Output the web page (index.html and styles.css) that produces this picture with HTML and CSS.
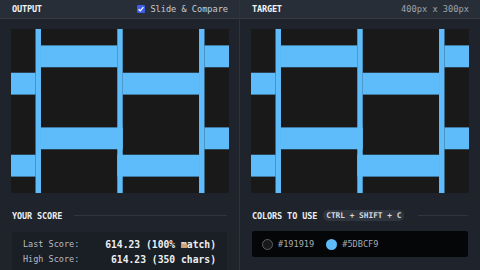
FILE: index.html
```html
<!DOCTYPE html>
<html>
<head>
<meta charset="utf-8">
<link rel="stylesheet" href="styles.css">
</head>
<body>
<div class="app">
  <section class="pane pane-left">
    <header class="bar">
      <span class="bar-title">OUTPUT</span>
      <label class="toggle"><span class="check"><svg viewBox="0 0 8 8" width="8" height="8"><path d="M1.6 4.2 L3.3 5.8 L6.4 2.2" fill="none" stroke="#fff" stroke-width="1.3"/></svg></span>Slide &amp; Compare</label>
    </header>
    <div class="stage">
      <svg class="canvas" viewBox="0 0 400 300" preserveAspectRatio="none">
        <rect width="400" height="300" fill="#191919"/>
        <g fill="#5DBCF9">
          <rect x="45" y="0" width="10" height="300"/>
          <rect x="195" y="0" width="10" height="300"/>
          <rect x="345" y="0" width="10" height="300"/>
          <rect x="55" y="30" width="140" height="40"/>
          <rect x="355" y="30" width="45" height="40"/>
          <rect x="0" y="80" width="45" height="40"/>
          <rect x="205" y="80" width="140" height="40"/>
          <rect x="55" y="180" width="150" height="40"/>
          <rect x="355" y="180" width="45" height="40"/>
          <rect x="0" y="230" width="45" height="40"/>
          <rect x="195" y="230" width="150" height="40"/>
        </g>
      </svg>
    </div>
    <div class="section">
      <div class="section-head"><span class="section-title">YOUR SCORE</span><span class="rule"></span></div>
      <div class="score-box">
        <span class="label">Last Score:</span><span class="value">614.23 (100% match)</span>
        <span class="label">High Score:</span><span class="value">614.23 (350 chars)</span>
      </div>
    </div>
  </section>
  <section class="pane pane-right">
    <header class="bar">
      <span class="bar-title">TARGET</span>
      <span class="dims">400px x 300px</span>
    </header>
    <div class="stage">
      <svg class="canvas" viewBox="0 0 400 300" preserveAspectRatio="none">
        <rect width="400" height="300" fill="#191919"/>
        <g fill="#5DBCF9">
          <rect x="45" y="0" width="10" height="300"/>
          <rect x="195" y="0" width="10" height="300"/>
          <rect x="345" y="0" width="10" height="300"/>
          <rect x="55" y="30" width="140" height="40"/>
          <rect x="355" y="30" width="45" height="40"/>
          <rect x="0" y="80" width="45" height="40"/>
          <rect x="205" y="80" width="140" height="40"/>
          <rect x="55" y="180" width="150" height="40"/>
          <rect x="355" y="180" width="45" height="40"/>
          <rect x="0" y="230" width="45" height="40"/>
          <rect x="195" y="230" width="150" height="40"/>
        </g>
      </svg>
    </div>
    <div class="section">
      <div class="section-head"><span class="section-title">COLORS TO USE</span><span class="kbd">CTRL + SHIFT + C</span><span class="rule rule-short"></span></div>
      <div class="colors-box">
        <span class="swatch swatch-dark"></span><span class="code">#191919</span>
        <span class="swatch swatch-blue"></span><span class="code">#5DBCF9</span>
      </div>
    </div>
  </section>
</div>
</body>
</html>
```

FILE: styles.css
```css
* { box-sizing: border-box; }
html, body { margin: 0; padding: 0; }
body {
  width: 480px;
  height: 270px;
  overflow: hidden;
  background: #1f242c;
  font-family: "DejaVu Sans Mono", "Liberation Mono", monospace;
  color: #e6e8eb;
}
.app {
  display: grid;
  grid-template-columns: 240px 240px;
  height: 270px;
  overflow: hidden;
}
.pane { display: flex; flex-direction: column; min-width: 0; overflow: hidden; }
.pane-left { border-right: 1px solid #2e343d; }
.bar {
  flex: none;
  height: 19px;
  background: #282e37;
  border-bottom: 1px solid #353c46;
  display: flex;
  align-items: center;
  justify-content: space-between;
  padding: 0 11px 0 12px;
}
.bar-title {
  font-size: 8.6px;
  font-weight: bold;
  color: #f0f2f4;
  letter-spacing: -0.2px;
}
.toggle {
  display: flex;
  align-items: center;
  gap: 5px;
  font-size: 8.6px;
  color: #c9ccd2;
}
.check {
  width: 8px;
  height: 8px;
  background: #3f5ee8;
  border-radius: 1px;
  display: flex;
}
.dims { font-size: 8.7px; color: #9ea4ac; }
.stage { flex: none; padding: 10px 0 0 11px; }
.canvas { display: block; width: 218px; height: 164px; }
.section { flex: 1; min-height: 0; padding: 17px 12px 0 12px; }
.section-head {
  display: flex;
  align-items: center;
  gap: 6px;
  height: 11px;
}
.section-title {
  font-size: 8.5px;
  font-weight: bold;
  color: #eceef0;
  letter-spacing: -0.1px;
}
.rule {
  flex: 1;
  height: 1px;
  background: #2f353e;
  margin-left: 6px;
}
.rule-short { margin-left: 8px; }
.kbd {
  font-size: 7.8px;
  font-weight: bold;
  color: #d4d8de;
  background: #2e353f;
  border-radius: 5px;
  padding: 1px 3px;
  line-height: 9px;
}
.score-box {
  margin-top: 11px;
  height: 38px;
  background: #1a1e25;
  display: grid;
  grid-template-columns: auto 1fr;
  align-content: start;
  row-gap: 4px;
  padding: 7px 11px 0 11px;
  line-height: 11px;
}
.label { font-size: 8.5px; color: #b8bcc3; }
.value {
  font-size: 9.7px;
  font-weight: bold;
  color: #eef0f2;
  text-align: right;
}
.colors-box {
  margin-top: 10px;
  height: 26px;
  background: #050608;
  border-radius: 2px;
  display: flex;
  align-items: center;
  padding: 0 10px;
}
.swatch {
  width: 11px;
  height: 11px;
  border-radius: 50%;
  margin-right: 5px;
}
.swatch-dark { background: #191919; border: 1px solid #5a5f66; }
.swatch-blue { background: #5DBCF9; margin-left: 12px; }
.code { font-size: 8.6px; color: #a7acb3; }
```
